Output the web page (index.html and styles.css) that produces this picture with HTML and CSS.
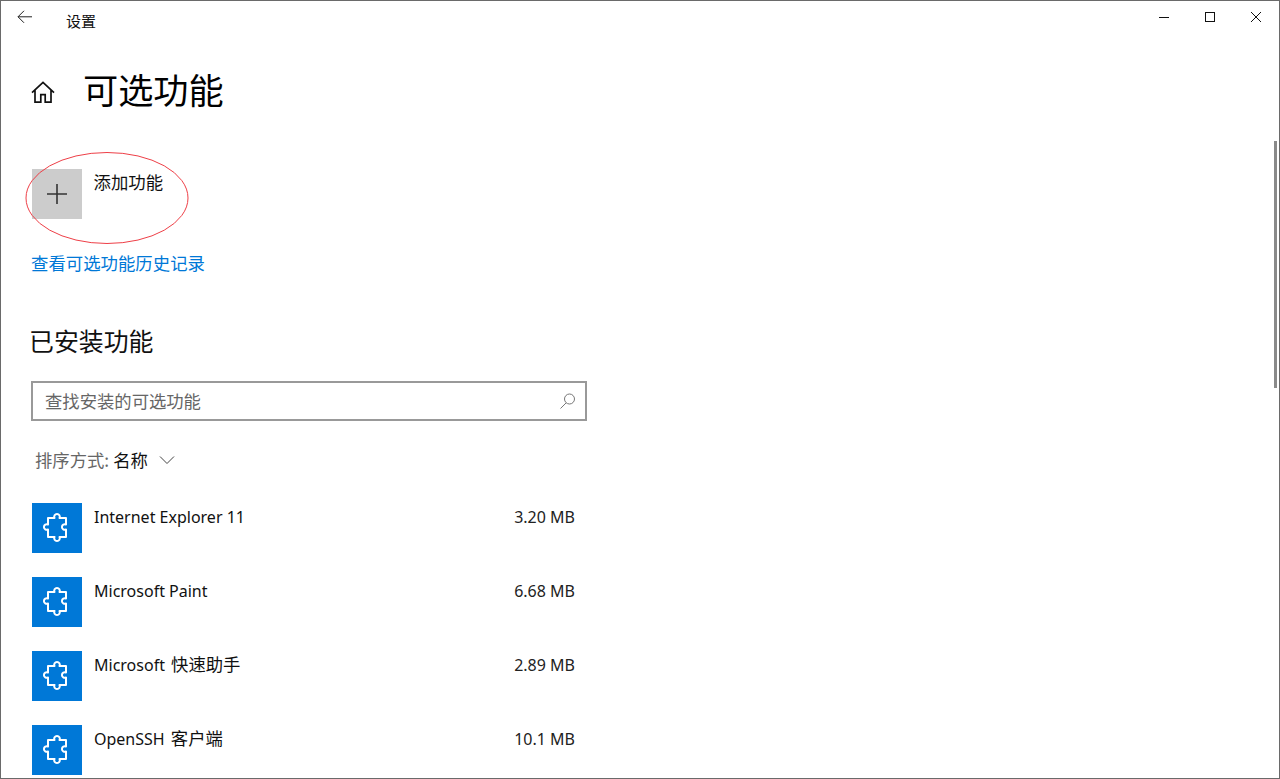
FILE: index.html
```html
<!DOCTYPE html>
<html lang="zh-CN">
<head>
<meta charset="utf-8">
<title>设置</title>
<link rel="stylesheet" href="styles.css">
</head>
<body>
<div class="window">
  <header class="titlebar">
    <div class="title-left">
      <svg class="back" width="16" height="14" viewBox="0 0 16 14"><path d="M7 .8 1 6.800l6 6M1 6.800H15" fill="none" stroke="#222" stroke-width="1"/></svg>
      <span class="app-name">设置</span>
    </div>
    <div class="controls">
      <svg class="ctl" width="46" height="12" viewBox="0 0 46 12"><path d="M18 6.500H28" stroke="#111" stroke-width="1"/></svg>
      <svg class="ctl" width="46" height="12" viewBox="0 0 46 12"><rect x="18.500" y="1.500" width="9" height="9" fill="none" stroke="#111" stroke-width="1"/></svg>
      <svg class="ctl" width="46" height="12" viewBox="0 0 46 12"><path d="M18 1 28 11M28 1 18 11" stroke="#111" stroke-width="1"/></svg>
    </div>
  </header>

  <main class="content">
    <div class="page-head">
      <svg class="home" width="24" height="24" viewBox="0 0 24 24"><path d="M1 12.700 12 2.500l11 10.200M4 10v12.200h5.800v-7.500h4.400v7.500H20V10" fill="none" stroke="#111" stroke-width="1.700"/></svg>
      <h1 class="page-title">可选功能</h1>
    </div>

    <div class="add-row">
      <div class="tile tile-gray">
        <svg width="22" height="22" viewBox="0 0 22 22"><path d="M11 1V21M1 11H21" stroke="#333" stroke-width="1.600"/></svg>
      </div>
      <span class="row-name cjk">添加功能</span>
    </div>

    <a class="history-link">查看可选功能历史记录</a>

    <h2 class="section-title">已安装功能</h2>

    <div class="search">
      <span class="search-text">查找安装的可选功能</span>
      <svg width="18" height="18" viewBox="0 0 18 18"><circle cx="10.500" cy="7" r="5" fill="none" stroke="#777" stroke-width="1"/><path d="M7 11 1.500 16.500" stroke="#777" stroke-width="1"/></svg>
    </div>

    <div class="sort">
      <span class="sort-label">排序方式:</span>
      <span class="sort-value">名称</span>
      <svg width="16" height="10" viewBox="0 0 16 10"><path d="M1 1.500 8 8.500 15 1.500" fill="none" stroke="#444" stroke-width="1"/></svg>
    </div>

    <ul class="features">
      <li class="feature">
        <div class="tile tile-blue"><svg class="puzzle" width="38" height="38" viewBox="0 0 38 38"><use href="#puzzle"/></svg></div>
        <span class="row-name">Internet Explorer 11</span>
        <span class="size">3.20 MB</span>
      </li>
      <li class="feature">
        <div class="tile tile-blue"><svg class="puzzle" width="38" height="38" viewBox="0 0 38 38"><use href="#puzzle"/></svg></div>
        <span class="row-name">Microsoft Paint</span>
        <span class="size">6.68 MB</span>
      </li>
      <li class="feature">
        <div class="tile tile-blue"><svg class="puzzle" width="38" height="38" viewBox="0 0 38 38"><use href="#puzzle"/></svg></div>
        <span class="row-name">Microsoft <span class="cjk-part">快速助手</span></span>
        <span class="size">2.89 MB</span>
      </li>
      <li class="feature">
        <div class="tile tile-blue"><svg class="puzzle" width="38" height="38" viewBox="0 0 38 38"><use href="#puzzle"/></svg></div>
        <span class="row-name">OpenSSH <span class="cjk-part">客户端</span></span>
        <span class="size">10.1 MB</span>
      </li>
    </ul>
  </main>

  <div class="scroll-thumb"></div>
  <svg class="annotation" width="166" height="96" viewBox="0 0 166 96"><ellipse cx="83" cy="48" rx="81" ry="45.500" fill="none" stroke="#ee3f47" stroke-width="1"/></svg>
</div>

<svg class="defs" width="0" height="0">
  <defs>
    <path id="puzzle" d="M10 9H16.500A2.800 2.800 0 1 1 21.500 9H28V15.500A2.800 2.800 0 1 0 28 20.500V28H21.500A2.800 2.800 0 1 1 16.500 28H10V20.500A2.800 2.800 0 1 1 10 15.500Z" fill="none" stroke="#fff" stroke-width="2" stroke-linejoin="round"/>
  </defs>
</svg>
</body>
</html>
```

FILE: styles.css
```css
* { box-sizing: border-box; }
html, body { margin: 0; padding: 0; height: 779px; overflow: hidden; background: #fff; }
body { font-family: "Noto Sans", "Noto Sans CJK SC", sans-serif; color: #111; }
.defs { position: absolute; }

.window {
  position: relative;
  width: 1280px;
  height: 779px;
  border: 1px solid #6a6a6a;
  overflow: hidden;
  background: #fff;
}

.titlebar { display: flex; justify-content: space-between; height: 44px; }
.title-left { display: flex; align-items: flex-start; padding: 8px 0 0 16px; }
.app-name { margin: 1px 0 0 33px; font-size: 15px; line-height: 21px; font-family: "Noto Sans CJK SC", sans-serif; }
.back { display: block; margin-top: 1px; }
.controls { display: flex; padding: 10px 0 0 0; }
.ctl { display: block; }

.content { padding: 0 0 0 30px; width: 600px; }

.page-head { display: flex; align-items: center; height: 60px; margin-top: 15px; }
.home { display: block; margin-top: 4px; }
.page-title { margin: 0 0 2px 28px; font-size: 35.200px; line-height: 60px; font-weight: 400; font-family: "Noto Sans CJK SC", sans-serif; color: #000; }

.add-row { display: flex; align-items: flex-start; margin: 49px 0 0 1px; }
.tile { width: 50px; height: 50px; display: flex; align-items: center; justify-content: center; flex: none; }
.tile-gray { background: #cccccc; }
.tile-blue { background: #0078d7; }
.row-name { margin-left: 12px; font-size: 16px; line-height: 24px; margin-top: 2px; color: #111; }
.row-name.cjk { margin-left: 11.500px; margin-top: 1px; font-size: 17.400px; font-family: "Noto Sans CJK SC", sans-serif; }
.cjk-part { font-size: 17.330px; line-height: 20px; font-family: "Noto Sans CJK SC", sans-serif; margin-left: 2px; }

.history-link { display: block; margin: 32px 0 0 0; font-size: 17.400px; line-height: 24px; color: #0078d7; font-family: "Noto Sans CJK SC", sans-serif; }

.section-title { margin: 47px 0 0 -2px; font-size: 24.900px; line-height: 36px; font-weight: 400; color: #111; font-family: "Noto Sans CJK SC", sans-serif; }

.search {
  display: flex; align-items: center; justify-content: space-between;
  width: 556px; height: 40px; margin: 23px 0 0 0;
  padding: 0 8px 0 12px; border: 2px solid #999; background: #fff;
}
.search-text { padding-bottom: 2px; font-size: 17.330px; color: #666; font-family: "Noto Sans CJK SC", sans-serif; }

.sort { display: flex; align-items: center; margin: 25px 0 0 4px; height: 28px; font-size: 17.330px; font-family: "Noto Sans CJK SC", sans-serif; }
.sort-label { padding-bottom: 1px; color: #666; }
.sort-value { padding-bottom: 1px; margin-left: 4px; color: #111; }
.sort svg { margin-left: 11px; }

.features { list-style: none; margin: 29px 0 0 1px; padding: 0; display: flex; flex-direction: column; gap: 24px; }
.feature { display: flex; align-items: flex-start; width: 543px; }
.feature .row-name { flex: 1; }
.size { margin-top: 2px; font-size: 16px; line-height: 24px; color: #222; }
.puzzle { display: block; }

.scroll-thumb { position: absolute; right: 2px; top: 140px; width: 3px; height: 247px; background: #8a8a8a; }
.annotation { position: absolute; left: 23px; top: 149px; }
```
